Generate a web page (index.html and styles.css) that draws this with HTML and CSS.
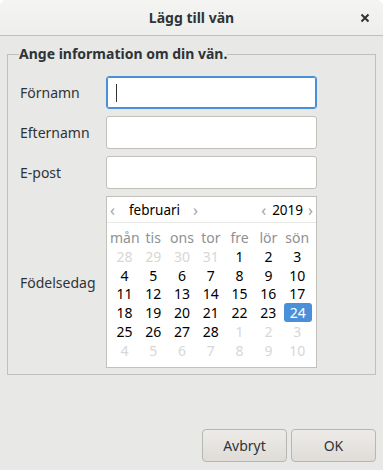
FILE: index.html
```html
<!DOCTYPE html>
<html lang="sv">
<head>
    <meta charset="UTF-8">
    <title>Lägg till vän</title>
    <link rel="stylesheet" href="styles.css">
</head>
<body>
    <div class="window">
        <header class="titlebar">
            <span class="title">Lägg till vän</span>
            <svg class="close" width="10" height="10" viewBox="0 0 10 10">
                <path d="M1.5 1.5 L8.5 8.5 M8.5 1.5 L1.5 8.5" stroke="#2e3436" stroke-width="2" fill="none"/>
            </svg>
        </header>
        <main class="content">
            <fieldset class="frame">
                <legend>Ange information om din vän.</legend>
                <div class="row">
                    <label>Förnamn</label>
                    <div class="entry focus"><span class="caret"></span></div>
                </div>
                <div class="row">
                    <label>Efternamn</label>
                    <div class="entry"></div>
                </div>
                <div class="row">
                    <label>E-post</label>
                    <div class="entry"></div>
                </div>
                <div class="row">
                    <label>Födelsedag</label>
                    <div class="calendar">
                        <div class="cal-head">
                            <div class="spin month"><span class="arrow">&#x2039;</span><span class="val">februari</span><span class="arrow">&#x203A;</span></div>
                            <div class="spin year"><span class="arrow">&#x2039;</span><span class="val">2019</span><span class="arrow">&#x203A;</span></div>
                        </div>
                        <div class="days">
                            <span class="dn">mån</span><span class="dn">tis</span><span class="dn">ons</span><span class="dn">tor</span><span class="dn">fre</span><span class="dn">lör</span><span class="dn">sön</span>
                            <span class="other">28</span><span class="other">29</span><span class="other">30</span><span class="other">31</span><span>1</span><span>2</span><span>3</span>
                            <span>4</span><span>5</span><span>6</span><span>7</span><span>8</span><span>9</span><span>10</span>
                            <span>11</span><span>12</span><span>13</span><span>14</span><span>15</span><span>16</span><span>17</span>
                            <span>18</span><span>19</span><span>20</span><span>21</span><span>22</span><span>23</span><span class="sel">24</span>
                            <span>25</span><span>26</span><span>27</span><span>28</span><span class="other">1</span><span class="other">2</span><span class="other">3</span>
                            <span class="other">4</span><span class="other">5</span><span class="other">6</span><span class="other">7</span><span class="other">8</span><span class="other">9</span><span class="other">10</span>
                        </div>
                    </div>
                </div>
            </fieldset>
        </main>
        <footer class="actions">
            <button class="btn">Avbryt</button>
            <button class="btn">OK</button>
        </footer>
    </div>
</body>
</html>
```

FILE: styles.css
```css
body {
    margin: 0;
    padding: 0;
    background-color: #ffffff;
    font-family: "Noto Sans", "DejaVu Sans", sans-serif;
    font-size: 14px;
    color: #2e3436;
}
.window {
    width: 383px;
    height: 470px;
    display: flex;
    flex-direction: column;
    background-color: #e8e8e7;
    border-radius: 7px 7px 0 0;
    overflow: hidden;
}
.titlebar {
    height: 35px;
    flex: none;
    display: flex;
    align-items: center;
    justify-content: center;
    position: relative;
    background: linear-gradient(#f4f4f3, #eeeeec);
    border-bottom: 1px solid #c3bfba;
}
.title {
    font-weight: bold;
    font-size: 14px;
}
.close {
    position: absolute;
    right: 13px;
    top: 13px;
}
.content {
    flex: 1;
    padding: 10px 7px 0 7px;
}
.frame {
    margin: 0;
    padding: 14px 0 6px 12px;
    border: 1px solid #c3bfba;
    height: 329px;
    box-sizing: border-box;
    display: flex;
    flex-direction: column;
    gap: 7px;
}
.frame legend {
    font-weight: bold;
    padding: 0;
    margin-left: -1px;
    line-height: 16px;
}
.row {
    display: flex;
    align-items: center;
}
.row label {
    width: 86px;
}
.entry {
    width: 211px;
    height: 33px;
    box-sizing: border-box;
    background: #ffffff;
    border: 1px solid #c3bfba;
    border-radius: 3px;
    display: flex;
    align-items: center;
}
.entry.focus {
    border-color: #4a90d9;
    box-shadow: inset 0 0 0 1px #4a90d9;
}
.caret {
    width: 1px;
    height: 18px;
    margin-left: 9px;
    background: #2e3436;
}
.calendar {
    width: 211px;
    height: 172px;
    box-sizing: border-box;
    background: #ffffff;
    border: 1px solid #c3bfba;
    display: flex;
    flex-direction: column;
}
.cal-head {
    height: 25px;
    flex: none;
    display: flex;
    justify-content: space-between;
    align-items: center;
    border-bottom: 1px solid #e8e8e7;
    padding: 0 3px 0 3px;
}
.spin {
    display: flex;
    align-items: center;
    font-size: 13.5px;
    color: #000000;
}
.spin.month .val {
    margin: 0 13px 0 14px;
}
.spin.year .val {
    margin: 0 5px 0 6px;
}
.arrow {
    color: #a0a2a3;
    font-size: 16px;
    line-height: 18px;
}
.days {
    display: grid;
    grid-template-columns: repeat(7, 28.8px);
    grid-auto-rows: 18.8px;
    padding: 5px 0 0 3px;
    font-size: 14px;
    color: #000000;
    text-align: center;
    line-height: 19px;
}
.days .dn {
    color: #8e9192;
}
.days .other {
    color: #d7d7d6;
}
.days .sel {
    background: #4a90d9;
    color: #ffffff;
    border-radius: 3px;
    margin-left: 1px;
}
.actions {
    flex: none;
    display: flex;
    justify-content: flex-end;
    gap: 4px;
    padding: 0 7px 8px 0;
}
.btn {
    width: 85px;
    height: 33px;
    font-family: inherit;
    font-size: 14px;
    color: #2e3436;
    background: linear-gradient(#edebe9, #dfdcd8);
    border: 1px solid #b6b6b3;
    border-radius: 4px;
}
```
